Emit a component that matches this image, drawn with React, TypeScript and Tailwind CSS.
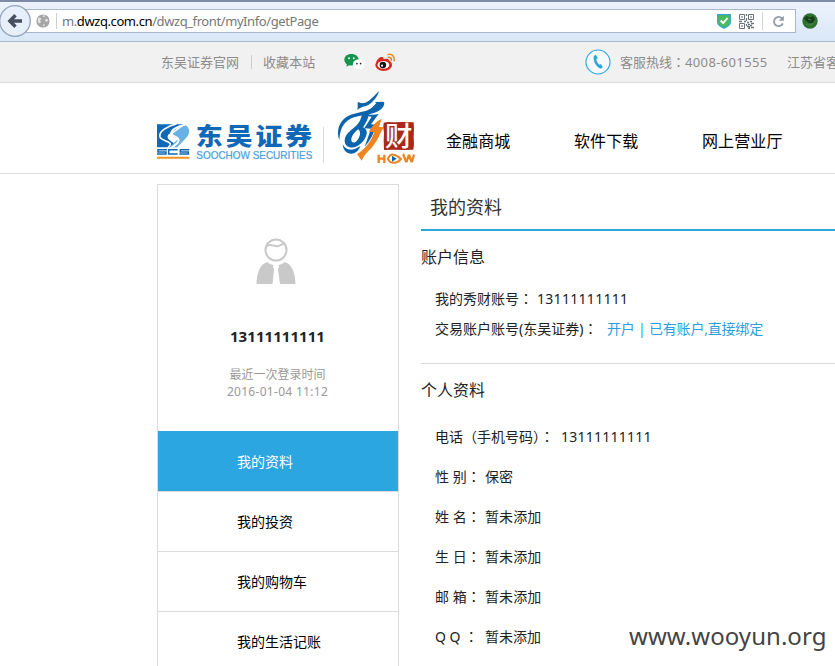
import React from "react";

const PROFILE: { label: string; value: string }[] = [
  { label: "性 别", value: "保密" },
  { label: "姓 名", value: "暂未添加" },
  { label: "生 日", value: "暂未添加" },
  { label: "邮 箱", value: "暂未添加" },
];
const MENU = ["我的资料", "我的投资", "我的购物车", "我的生活记账"];

function Wide({ children }: { children: string }) {
  return <span className="font-['Noto_Sans_CJK_TC',sans-serif] leading-[0px]">{children}</span>;
}

function Globe() {
  return (
    <svg width="14" height="14" viewBox="0 0 14 14">
      <circle cx="7" cy="7" r="6.6" fill="#a6a6a6" />
      <path d="M2 4 4 3.500 5.500 5 4 6.500 5 8 3.500 9.500 1.800 8zM7 1.500 9 1.200 8.500 3 7 3zM9 5.500 11 4.800 12.300 6.500 11 7.500 9.500 7.800zM7.500 10 9 10.800 8 12.300 7 11.800z" fill="#e6e6e6" />
    </svg>
  );
}

function QrIcon() {
  return (
    <svg width="15" height="15" viewBox="0 0 15 15" fill="none" stroke="#6a7380">
      <path d="M.5.5h5v5h-5zM9.500.5h5v5h-5zM.5 9.500h5v5h-5z" />
      <path d="M2.300 3h1.500M11.300 3h1.500M2.300 12h1.500M7.500 0v2M7.500 4v3M0 7.500h3M5 7.500h2M8 8.500h2M11 7.500h2M9 10.500h2M12 9.500h3M7.500 10v2M8 12.500h2M11 11.500h2M9 14.500h2M12 13.500h3M10.500 12v2" strokeWidth="1.300" />
    </svg>
  );
}

function BrowserBar() {
  return (
    <div className="flex h-[42px] border-b border-[#a9b9d0] border-t-2 border-t-[#7c8ba6] bg-linear-to-b from-[#edf3fc] to-[#d9e7f7] pt-[7px]">
      <svg width="31" height="38" viewBox="0 0 31 38" className="relative z-10 -mt-[6px] shrink-0">
        <circle cx="15" cy="18" r="15.3" fill="#e6effa" stroke="#94a4ba" strokeWidth="1.3" />
        <path d="M15.5 12.2 9.8 18l5.7 5.8M10.5 18H22" fill="none" stroke="#474f5c" strokeWidth="3.4" />
      </svg>
      <div className="-ml-[6px] flex h-6 w-[771px] items-center border border-[#a9b7cc] bg-white pl-[10px] pr-[9px]">
        <Globe />
        <div className="ml-[6px] h-4 w-px bg-[#cfcfcf]" />
        <div className="ml-[5px] whitespace-pre text-[13px] leading-[22px] tracking-[-0.41px] text-[#777]">
          m.<span className="text-black">dwzq.com.cn</span>/dwzq_front/myInfo/getPage
        </div>
        <svg width="14" height="15" viewBox="0 0 14 15" className="ml-auto">
          <path d="M.7.7h12.6V8c0 3-4 5.200-6.300 6.200C4.700 13.200.7 11 .7 8z" fill="#4cbb5a" stroke="#35a5c9" strokeWidth="1.300" />
          <path d="m3.700 6.500 2.500 2.600L10.500 4" fill="none" stroke="#fff" strokeWidth="1.900" />
        </svg>
        <div className="ml-2"><QrIcon /></div>
        <div className="ml-[8px] h-[18px] w-px bg-[#d0d4da]" />
        <svg width="13" height="13" viewBox="0 0 13 13" className="ml-[9px] mr-px">
          <path d="M9.800 3.200A4.600 4.600 0 1 0 10.800 8.400" fill="none" stroke="#929ba8" strokeWidth="1.900" />
          <path d="M11.800.8v5H6.800z" fill="#929ba8" />
        </svg>
      </div>
      <svg width="16" height="16" viewBox="0 0 16 16" className="ml-[6px] mt-1">
        <circle cx="8" cy="8" r="7.700" fill="#2d7030" />
        <path d="M2 5 5 3l3 1.500L11 3l2 3-2 4-4 0-3-2z" fill="#173f1e" />
        <path d="M4 11c3 2 7 1 9-3M6 6l3 1" stroke="#468c40" fill="none" />
      </svg>
    </div>
  );
}

function TopStrip() {
  return (
    <div className="flex h-[41px] items-center overflow-hidden whitespace-nowrap border-b border-[#dcdcdc] bg-[#f1f1f1] pl-[161px] text-[13px] leading-5 text-[#8c8c8c]">
      <span className="w-[90px] shrink-0">东吴证券官网</span>
      <span className="h-[14px] w-px shrink-0 bg-[#ccc]" />
      <span className="ml-[11px] w-[81px] shrink-0 tracking-[0.1px]">收藏本站</span>
      <svg width="21" height="19" viewBox="0 0 20 18" className="shrink-0">
        <path d="M7 1C3 1 .3 3.300.3 6.400c0 1.800 1 3.300 2.500 4.300L2.300 13l2.600-1.500c4.700 1 9-1.200 9-5.100C13.900 3.300 11 1 7 1z" fill="#12964c" />
        <circle cx="4.800" cy="5" r=".9" fill="#fff" /><circle cx="9.300" cy="5" r=".9" fill="#fff" />
        <path d="M14 6.200c-3.300 0-5.500 2-5.500 4.500s2.200 4.500 5.500 4.500l1.500-.2 2 1.100-.4-1.800c1.500-.8 2.300-2.100 2.300-3.600 0-2.500-2.300-4.500-5.400-4.500z" fill="#fff" />
        <circle cx="12.300" cy="10" r=".8" fill="#222" /><circle cx="15.800" cy="10" r=".8" fill="#222" />
      </svg>
      <svg width="21" height="19" viewBox="0 0 20 18" className="ml-[10px] shrink-0">
        <ellipse cx="8.300" cy="11.300" rx="8" ry="5.700" fill="#d8281d" />
        <path d="M.8 9c2-4.500 5-6 6.700-5 1 .8.500 2 .5 2s4-1.500 5 .2c.5 1-.3 2-.3 2z" fill="#d8281d" />
        <ellipse cx="8" cy="11.300" rx="5.600" ry="3.700" fill="#fff" />
        <circle cx="7.500" cy="11.300" r="3.100" fill="#151515" /><circle cx="6.700" cy="12" r="1" fill="#fff" />
        <path d="M12.500 1.300c3.700-.8 6.500 2 5.600 6M12.700 4.100c1.900-.4 3.200.9 2.800 2.700" fill="none" stroke="#e88b28" strokeWidth="1.500" strokeLinecap="round" />
      </svg>
      <svg width="26" height="26" viewBox="0 0 26 26" className="ml-[189px] shrink-0">
        <circle cx="13" cy="13" r="12" fill="#f6fafc" stroke="#2da6df" strokeWidth="1.100" />
        <path d="M8.800 7 10.800 5.800l1.900 3.200-1.400 1.400c.4 2.100 1.500 3.900 3.200 5.300l1.500-.6 1.700 3.100-1.700 1.500c-4.500-.9-8.200-7.700-7.200-12.700z" fill="#2da6df" />
      </svg>
      <span className="ml-[9px] w-[167px] shrink-0">客服热线<Wide>：</Wide><span className="tracking-[0.36px]">4008-601555</span></span>
      <span>江苏省客</span>
    </div>
  );
}

function SoochowLogo() {
  return (
    <svg width="173" height="85" viewBox="0 0 519 255" className="shrink-0">
      <path d="M21 118h80L56 148c-7 8-2 14 6 20l12 8-14 11H21z" fill="#1168b7" />
      <path d="M66 148 104 119c14 6 19 23 6 38l-28 30H58l27-26z" fill="#69b0e4" />
      <path d="M79 117c-26 5-54 23-49 39 4 11 28 12 31 20 2 5-3 8-8 13" fill="none" stroke="#fff" strokeWidth="5" />
      <path d="M105 119c-25 5-43 17-41 27 2 9 23 10 22 20-1 8-14 17-23 23" fill="none" stroke="#fff" strokeWidth="6" />
      <path d="M51 194H24v7h24v6H21M83 194H56v13h27M118 194H91v7h24v6H88" fill="none" stroke="#1168b7" strokeWidth="4.500" />
      <path d="M21 215h97v6H21z" fill="#f09420" />
      <g transform="translate(137 180) scale(1.050 .930)">
        <text x="0 86 171 255" y="0" fontSize="77" fontWeight="900" fontFamily="Noto Sans CJK SC, sans-serif" fill="#1168b7">东吴证券</text>
      </g>
      <text x="139" y="221" fontSize="33" fontFamily="Liberation Sans, sans-serif" textLength="348" lengthAdjust="spacingAndGlyphs" fill="#4a9fd8" stroke="#4a9fd8" strokeWidth=".7">SOOCHOW SECURITIES</text>
    </svg>
  );
}

function ShowLogo() {
  return (
    <svg width="95" height="85" viewBox="0 0 285 255" className="ml-[6px] shrink-0">
      <g fill="#0c64ad">
        <path d="M147 18c-4 16-17 32-32 42-9 5-18 5-25 9l-8 6c3-9-1-18 2-25 4 4 13 6 22 3 15-6 27-21 41-35z" />
        <path d="M134 51l26-1c6 3 2 16-10 25-18 14-55 15-78 22-26 9-42 27-44 69-10-31 0-54 20-69 20-14 48-14 66-22 13-6 19-14 25-21-2-1-4-2-5-3z" />
        <path fillRule="evenodd" d="M96 86h21c-2 16-10 29-18 41 9 3 14 12 10 24-7 22-30 41-50 36-18-5-20-27-5-43 11-12 25-19 33-32 5-9 8-17 9-26zM84 133c-11 10-21 22-20 33 1 9 11 8 17 1 9-10 14-28 3-34z" />
        <path d="M103 84c14 6 28 7 43 3l-23 31 15 1c-5 24-17 47-34 66l19-54-20-1 22-35c-9 0-17-4-22-11z" />
        <path d="M38 178c7 14 21 20 38 13l16-8c-8 16-17 24-30 23-15-1-23-13-24-28z" />
      </g>
      <path d="M155 101l-8 25 15 1-8 12c-11 27-25 47-45 66-5 6-10 13-14 22l-14-20c27-16 43-40 52-66l-16-1c8-17 21-31 38-39z" fill="#ef8420" />
      <path d="m161 113 12-2 17 1 27-1 34 1 1 20-1 25 1 21-2 16-28 1-31-1-29 1-1-27 1-23-2-18z" fill="#a92a1d" />
      <text x="165" y="184" fontSize="82" fontWeight="500" fontFamily="Noto Sans CJK SC, sans-serif" fill="#fff">财</text>
      <g fill="none" stroke="#ef8420" strokeWidth="7">
        <path d="M146 209v25M163 209v25M146 221h18" />
        <path d="M218 209h2l8 20h2l6-17h2l6 17h2l6-20" strokeWidth="7" />
        <path d="M174 221c3-8 9-13 17-12s16 7 22 13c-6 7-14 12-22 11-9 0-15-5-17-12z" strokeWidth="6" />
      </g>
      <path d="m186 212 14 9-14 9z" fill="#0c64ad" />
    </svg>
  );
}

function Header() {
  return (
    <header className="flex h-[91px] overflow-hidden whitespace-nowrap border-b border-[#dcdcdc] pl-[150px] pt-[2px]">
      <SoochowLogo />
      <div className="mt-[42px] h-9 w-px shrink-0 bg-[#d7d7d7]" />
      <ShowLogo />
      <nav className="ml-[21px] mt-[44px] flex text-[16px] leading-6 tracking-[0.1px] text-black">
        <span className="w-32">金融商城</span>
        <span className="w-32">软件下载</span>
        <span>网上营业厅</span>
      </nav>
    </header>
  );
}

function Sidebar() {
  return (
    <aside className="h-[483px] w-[242px] shrink-0 border border-b-0 border-[#dcdcdc]">
      <div className="flex h-[246px] flex-col items-center pr-px">
        <svg width="40" height="47" viewBox="0 0 40 47" className="mr-[3px] mt-[53px] shrink-0">
          <g fill="none" stroke="#c9c9c9" strokeWidth="2">
            <circle cx="20" cy="12" r="10.500" />
            <path d="M11 8c4-3 7 1 11 0 3-1 4-2 7-2" />
          </g>
          <path d="M.5 46C1 34 4 26.500 11 24c2 1.500 4 2.500 6.300 3l.7 5L16.500 46zM39.500 46C39 34 36 26.500 29 24c-2 1.500-4 2.500-6.300 3l-.7 5L24 46z" fill="#c9c9c9" />
          <path d="M17 28.500 20 26l3 2.500-1.500 3L23.500 46h-6l1-14.500z" fill="#fff" />
        </svg>
        <div className="mt-[39px] text-[15px] font-bold leading-6 tracking-[0.06px] text-[#222]">13111111111</div>
        <div className="mt-[18px] text-center text-[12px] leading-[17px] text-[#999]">
          <div>最近一次登录时间</div>
          <div className="tracking-[0.3px]">2016-01-04 11:12</div>
        </div>
      </div>
      {MENU.map((m, i) => (
        <div key={m} className={i === 0 ? "h-[60px] bg-[#2ba6e1] pl-[79px] text-[14px] leading-[62px] text-white" : "h-[60px] border-t border-[#dcdcdc] pl-[79px] text-[14px] leading-[60px] text-black"}>{m}</div>
      ))}
    </aside>
  );
}

function Details() {
  return (
    <main className="ml-[22px] w-[414px] shrink-0 whitespace-nowrap text-[14px] text-[#222]">
      <h1 className="h-[47px] border-b-2 border-[#2ba6e1] pl-[9px] text-[18px] leading-[47px] text-[#333]">我的资料</h1>
      <h2 className="mt-[14px] text-[16px] leading-6">账户信息</h2>
      <div className="mt-[15px] pl-[14px] leading-[30px]">
        <div className="flex h-[30px]"><span className="w-[102px]">我的秀财账号<Wide>：</Wide></span><span className="tracking-[0.3px]">13111111111</span></div>
        <div className="flex h-[30px]"><span className="w-[172px]">交易账户账号(东吴证券)<Wide>：</Wide></span><span className="tracking-[-0.2px] text-[#2b9fdc]">开户 | 已有账户,直接绑定</span></div>
      </div>
      <div className="mt-[19px] h-px bg-[#dcdcdc]" />
      <h2 className="mt-[14px] text-[16px] leading-6">个人资料</h2>
      <div className="mt-[15px] pl-[14px] leading-10">
        <div className="flex h-10"><span className="w-[126px]">电话<Wide>（</Wide>手机号码<Wide>）：</Wide></span><span className="tracking-[0.25px]">13111111111</span></div>
        {PROFILE.map((p) => (
          <div key={p.label} className="flex h-10"><span className="w-[50px]">{p.label}<Wide>：</Wide></span><span className="tracking-[0.1px]">{p.value}</span></div>
        ))}
        <div className="flex h-10"><span className="w-[50px]">Q Q <Wide>：</Wide></span><span>暂未添加</span></div>
      </div>
    </main>
  );
}

export default function App() {
  return (
    <div className="relative h-[666px] w-[835px] overflow-hidden bg-white font-['Noto_Sans','Noto_Sans_CJK_SC',sans-serif]">
      <BrowserBar />
      <TopStrip />
      <Header />
      <div className="flex pl-[157px] pt-[10px]">
        <Sidebar />
        <Details />
      </div>
      <div className="absolute left-[629px] top-[618px] whitespace-nowrap text-[24px] leading-9 tracking-[0.05px] text-[#444]">www.wooyun.org</div>
    </div>
  );
}
